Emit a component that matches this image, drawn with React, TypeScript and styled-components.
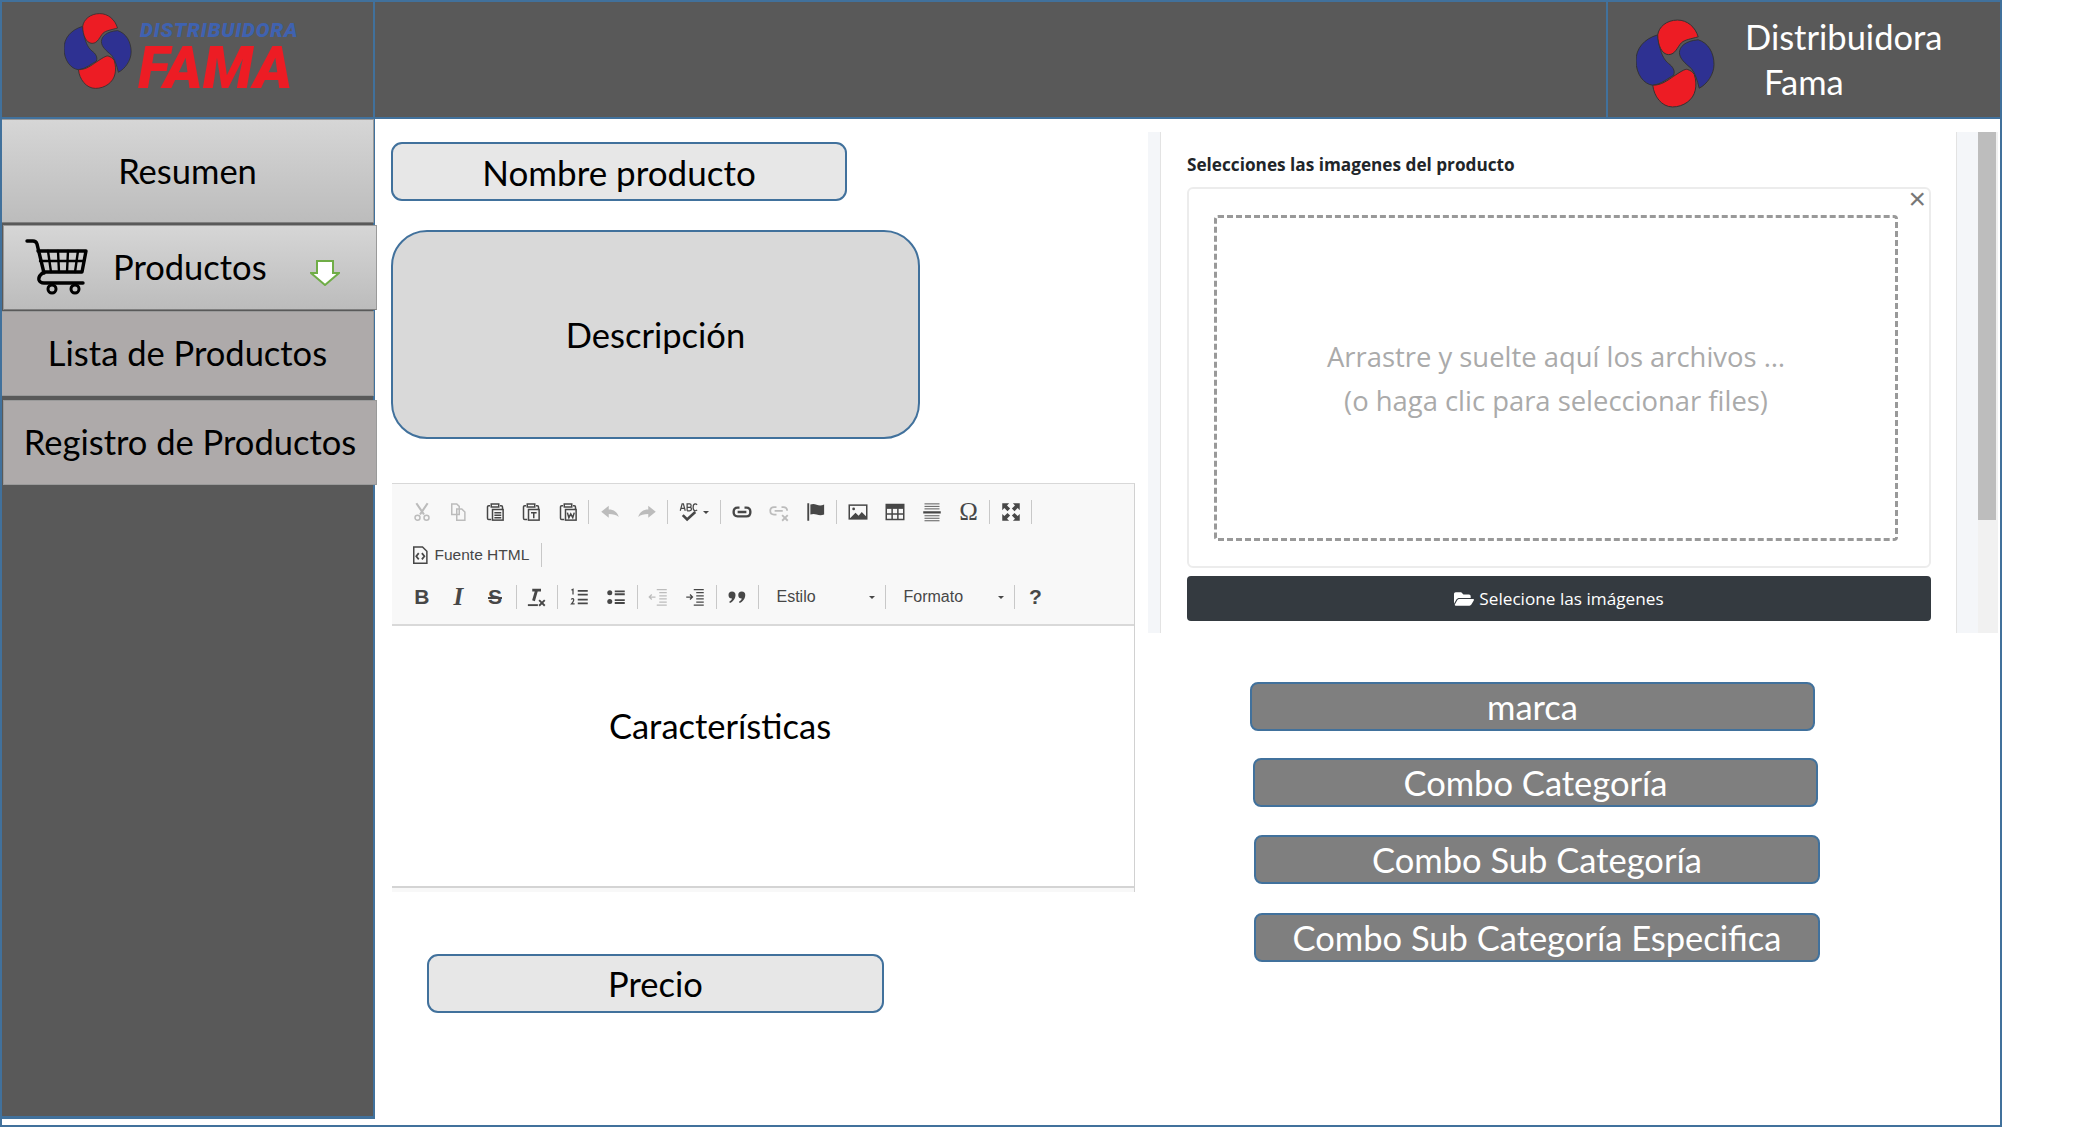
import { ReactNode } from 'react'
import styled, { createGlobalStyle } from 'styled-components'
import { FaFolderOpen } from 'react-icons/fa'

const GlobalStyle = createGlobalStyle`
    html, body {
        margin: 0;
        background: #ffffff;
    }
    * {
        box-sizing: border-box;
    }
`

const BLUE = '#41719c'
const OFFICE_FONT = 'Lato, "Noto Sans", sans-serif'

const Frame = styled.div`
    width: 2002px;
    height: 1127px;
    border: 2px solid ${BLUE};
    background: #ffffff;
    font-family: ${OFFICE_FONT};
    overflow: hidden;
`

const Header = styled.header`
    display: flex;
    height: 117px;
    background: #595959;
    border-bottom: 2px solid ${BLUE};
`

const LogoCell = styled.div`
    display: flex;
    align-items: flex-start;
    width: 373px;
    padding: 10px 0 0 62px;
    border-right: 2px solid ${BLUE};
`

const LogoText = styled.div`
    display: flex;
    flex-direction: column;
    margin-left: 6px;
    font-family: Roboto, sans-serif;
    font-style: italic;
    font-weight: 900;
`

const LogoTop = styled.span`
    margin: 8px 0 0 2px;
    font-size: 20.5px;
    line-height: 20px;
    color: #3f62b0;
    letter-spacing: 0.8px;
`

const LogoBottom = styled.span`
    margin-top: 6px;
    font-size: 59px;
    line-height: 44px;
    color: #ed1c24;
`

const HeaderFill = styled.div`
    flex: 1;
`

const BrandCell = styled.div`
    display: flex;
    align-items: flex-start;
    width: 394px;
    padding: 17px 0 0 28px;
    border-left: 2px solid ${BLUE};
`

const BrandName = styled.div`
    margin: -5px 0 0 30px;
    color: #ffffff;
    font-size: 34.5px;
    line-height: 45px;
`

const BrandLine = styled.div<{ $indent?: number }>`
    margin-left: ${(props) => props.$indent ?? 0}px;
`

const Body = styled.div`
    display: flex;
    align-items: flex-start;
`

const Sidebar = styled.aside`
    display: flex;
    flex-direction: column;
    flex: none;
    width: 373px;
    height: 1000px;
    background: #595959;
    border-right: 2px solid ${BLUE};
    border-bottom: 3px solid ${BLUE};
`

const MenuItem = styled.div<{ $variant: 'light' | 'plain'; $shift: number; $height: number; $gap?: number; $width?: number }>`
    display: flex;
    align-items: center;
    justify-content: center;
    flex: none;
    position: relative;
    width: ${(props) => props.$width ?? 373}px;
    height: ${(props) => props.$height}px;
    margin-left: ${(props) => props.$shift}px;
    margin-bottom: ${(props) => props.$gap ?? 0}px;
    padding-bottom: 2px;
    background: ${(props) => props.$variant === 'light'
        ? 'linear-gradient(#d6d6d6, #bcbcbc)'
        : '#aeaaaa'};
    border: 1px solid #9a9a9a;
    border-bottom-color: ${(props) => props.$variant === 'light' ? '#7f7f7f' : '#9a9a9a'};
    color: #000000;
    font-size: 34.5px;
`

const CartItemRow = styled(MenuItem)`
    justify-content: flex-start;
    padding: 0 0 0 21px;
`

const CartLabel = styled.span`
    margin: 0 0 2px 24px;
`

const ArrowMark = styled.svg`
    margin-left: 43px;
    margin-top: 10px;
`

const Main = styled.main`
    display: flex;
    flex: 1;
`

const LeftColumn = styled.section`
    display: flex;
    flex-direction: column;
    flex: none;
    align-items: flex-start;
    width: 773px;
    padding: 23px 0 0 16px;
`

const FieldBox = styled.div<{ $width: number; $height: number; $radius: number; $tone: string; $top?: number; $left?: number; $size?: number }>`
    display: flex;
    align-items: center;
    justify-content: center;
    width: ${(props) => props.$width}px;
    height: ${(props) => props.$height}px;
    margin-top: ${(props) => props.$top ?? 0}px;
    margin-left: ${(props) => props.$left ?? 0}px;
    border: 2px solid ${BLUE};
    border-radius: ${(props) => props.$radius}px;
    background: ${(props) => props.$tone};
    color: #000000;
    font-size: ${(props) => props.$size ?? 34.5}px;
`

const Editor = styled.div`
    width: 743px;
    height: 409px;
    margin: 44px 0 0 1px;
    display: flex;
    flex-direction: column;
    border-top: 1px solid #d8d8d8;
    border-right: 1px solid #d1d1d1;
    background: #f8f8f8;
`

const Toolbar = styled.div`
    display: flex;
    flex-direction: column;
    flex: none;
    height: 142px;
    padding: 7px 0 0 11.5px;
    background: #f8f8f8;
    border-bottom: 2px solid #d9d9d9;
`

const ToolRow = styled.div`
    display: flex;
    align-items: center;
    height: 42.5px;
`

const ToolButton = styled.span<{ $dim?: boolean; $width?: number }>`
    display: flex;
    align-items: center;
    justify-content: center;
    flex: none;
    width: ${(props) => props.$width ?? 37}px;
    height: 24px;
    color: ${(props) => props.$dim ? '#bcbcbc' : '#474747'};
`

const ToolSeparator = styled.span<{ $space?: number }>`
    flex: none;
    width: 1px;
    height: 24px;
    margin: 0 ${(props) => props.$space ?? 2}px;
    background: #c8c8c8;
`

const SourceButton = styled.span`
    display: flex;
    align-items: center;
    gap: 5px;
    padding-left: 6px;
    margin-right: 10px;
    color: #474747;
    font-family: "Liberation Sans", sans-serif;
    font-size: 15.5px;
`

const ComboButton = styled.span<{ $width: number }>`
    display: flex;
    align-items: center;
    justify-content: space-between;
    flex: none;
    width: ${(props) => props.$width}px;
    padding: 0 8px 0 16px;
    color: #474747;
    font-family: "Liberation Sans", sans-serif;
    font-size: 16px;
`

const Caret = styled.i<{ $gap?: number }>`
    display: inline-block;
    width: 0;
    height: 0;
    margin-left: ${(props) => props.$gap ?? 0}px;
    border-left: 3.5px solid transparent;
    border-right: 3.5px solid transparent;
    border-top: 3.5px solid #474747;
`

const EditorContent = styled.div`
    display: flex;
    justify-content: center;
    flex: 1;
    padding: 77px 86px 0 0;
    background: #ffffff;
    border-bottom: 2px solid #d4d4d4;
    color: #000000;
    font-size: 34.5px;
    line-height: 46px;
`

const EditorFoot = styled.div`
    flex: none;
    height: 4px;
    background: #f8f8f8;
`

const RightColumn = styled.section`
    flex: 1;
    padding-top: 13px;
`

const UploadPanel = styled.div`
    display: flex;
    height: 501px;
`

const PanelBand = styled.div<{ $side: 'left' | 'right'; $width: number }>`
    flex: none;
    width: ${(props) => props.$width}px;
    background: #f4f6f9;
    border-${(props) => props.$side === 'left' ? 'right' : 'left'}: 1px solid #e3e3e3;
`

const PanelBody = styled.div`
    flex: 1;
    display: flex;
    flex-direction: column;
    padding: 21px 25px 12px 26px;
    background: #ffffff;
`

const PanelLabel = styled.label`
    flex: none;
    height: 34px;
    font-family: "Open Sans", sans-serif;
    font-size: 17.2px;
    font-weight: 700;
    line-height: 24px;
    color: #212529;
`

const DropArea = styled.div`
    position: relative;
    flex: none;
    height: 381px;
    padding: 26px 31px 25px 25px;
    border: 2px solid #ececec;
    border-radius: 6px;
`

const DashedZone = styled.div`
    display: flex;
    flex-direction: column;
    align-items: center;
    justify-content: center;
    height: 100%;
    padding-top: 2px;
    border: 3px dashed #999999;
    border-radius: 4px;
    font-family: "Open Sans", sans-serif;
    font-size: 27.4px;
    line-height: 44px;
    color: #aaaaaa;
`

const CloseMark = styled.span`
    position: absolute;
    top: -2px;
    right: 3px;
    color: #777777;
    font-family: "Liberation Sans", sans-serif;
    font-size: 30px;
    line-height: 24px;
`

const PickButton = styled.button`
    display: flex;
    align-items: center;
    justify-content: center;
    gap: 5px;
    flex: none;
    height: 45px;
    margin-top: 8px;
    border: none;
    border-radius: 4px;
    background: #343a40;
    color: #ffffff;
    font-family: "Open Sans", sans-serif;
    font-size: 17.2px;
`

const Scrollbar = styled.div`
    flex: none;
    width: 20px;
    margin-right: 2px;
    background: #f1f1f1;
`

const ScrollThumb = styled.div`
    width: 18px;
    height: 388px;
    background: #bdbdbd;
`

const ComboList = styled.div`
    display: flex;
    flex-direction: column;
    margin: 22px 0 0 102px;
`

const ComboBox = styled.div<{ $shift: number; $top: number; $width?: number }>`
    display: flex;
    align-items: center;
    justify-content: center;
    width: ${(props) => props.$width ?? 565}px;
    height: 49px;
    margin-top: ${(props) => props.$top}px;
    margin-left: ${(props) => props.$shift}px;
    border: 2px solid ${BLUE};
    border-radius: 8px;
    background: #7f7f7f;
    color: #ffffff;
    font-size: 34.5px;
`

function LogoMark({ width, height }: { width: number; height: number }) {
    return (
        <svg width={width} height={height} viewBox="0 0 80 90" style={{ flex: 'none' }}>
            <g stroke="#333" strokeWidth="1">
                <path fill="#2e3192" d="M22 16C8 20 0 30 0 42C0 56 8 66 17 67C26 66 32 60 38 57C40 52 37 48 33 45C28 41 24 34 22 16Z" />
                <path fill="#2e3192" d="M63 21C73 24 79 34 79 46C79 56 72 66 64 70C62 62 60 55 56 50C50 45 44 40 44 34C44 28 50 22 63 21Z" />
                <path fill="#ed1c24" d="M42 1C52 1 60 8 63 18C56 20 49 21 46 24C42 28 40 36 33 36C26 36 22 26 22 16C23 8 31 1 42 1Z" />
                <path fill="#ed1c24" d="M59 56C61 62 61 68 60 72C58 82 48 89 37 89C26 89 18 78 17 67C26 67 32 62 38 58C44 54 50 50 52 51C55 52 57 53 59 56Z" />
            </g>
        </svg>
    )
}

function CartIcon() {
    return (
        <svg width="64" height="58" viewBox="0 0 64 58" fill="none" stroke="#000" strokeLinecap="round" strokeLinejoin="round" style={{ flex: 'none' }}>
            <path strokeWidth="3.4" d="M2 2H8Q11 2 12 5L19 34" />
            <path strokeWidth="3.4" d="M13 12H61L57 33H19Q13 37 14 41Q15 44 19 44H58" />
            <path strokeWidth="2.4" d="M15 22H59M23 12L26 33M33 12L34 33M43 12L42 33M53 12L50 33" />
            <circle strokeWidth="3" cx="27" cy="50" r="4" />
            <circle strokeWidth="3" cx="50" cy="50" r="4" />
        </svg>
    )
}

// 16x16 toolbar pictures, drawn to look like the editor's own set
function Glyph({ children, size = 20 }: { children: ReactNode; size?: number }) {
    return (
        <svg width={size} height={size} viewBox="0 0 16 16" fill="none" stroke="currentColor" strokeWidth="1.2">
            {children}
        </svg>
    )
}

const clipboard = <path d="M4 3H3Q2 3 2 4V13Q2 14 3 14H5M5 1.500H11V4H5ZM12 3H13Q14 3 14 4V6" />

const glyphs: Record<string, ReactNode> = {
    cut: <><path strokeWidth="1.7" d="M3.5 1L9.6 10M12.5 1L6.4 10" /><circle cx="4.4" cy="12.6" r="2" /><circle cx="11.6" cy="12.6" r="2" /></>,
    copy: <path d="M3 1.5H7L9 3.5V10H3ZM7 5.5H11L13.5 8V14.5H7Z" />,
    paste: <>{clipboard}<rect x="6" y="6" width="8.5" height="8.5" /><path d="M7.5 8.5H13M7.5 10.5H13M7.5 12.5H13" /></>,
    pasteText: <>{clipboard}<rect x="6" y="6" width="8.5" height="8.5" /><path d="M8 8.5H12.5M10.2 8.5V13" /></>,
    pasteWord: <>{clipboard}<rect x="6" y="6" width="8.5" height="8.5" /><path d="M7.5 8.5L8.7 12.5L10.2 9.5L11.8 12.5L13 8.5" /></>,
    undo: <path fill="currentColor" stroke="none" d="M7 3V6C11 6 14 8 15 12C13 10 10.500 9.500 7 9.500V12.500L1 7.800Z" />,
    redo: <path fill="currentColor" stroke="none" d="M9 3V6C5 6 2 8 1 12C3 10 5.500 9.500 9 9.500V12.500L15 7.800Z" />,
    spell: <><path strokeWidth="1" d="M1 7L2.500 1.500H3.500L5 7M1.700 5H4.300M6.500 7V1.500H8.500Q9.700 1.500 9.700 2.900Q9.700 4.200 8.500 4.200H6.500M8.500 4.200Q10 4.200 10 5.600Q10 7 8.500 7H6.500M14.500 2.200Q13.800 1.500 13 1.500Q11.300 1.500 11.300 4.200Q11.300 7 13 7Q13.800 7 14.500 6.300" /><path strokeWidth="2.100" d="M3 10.500L6.500 14L13 8" /></>,
    link: <path strokeWidth="1.900" d="M6 4.500H4.500Q1.300 4.500 1.300 8Q1.300 11.500 4.500 11.500H11.500Q14.700 11.500 14.700 8Q14.700 4.500 11.500 4.500H10M4.500 8H11.500" />,
    unlink: <><path strokeWidth="1.400" d="M6 4H4Q1 4 1 7Q1 10 4 10H6M10 4H11.500Q14.500 4 14.500 7M4.500 7H11" /><path strokeWidth="1.500" d="M10.500 10.500L15 15M15 10.500L10.500 15" /></>,
    flag: <><path d="M1.800 1V15" strokeWidth="1.500" /><path fill="currentColor" stroke="none" d="M3.500 2Q6 1 8.500 2.200Q11.500 3.400 14.500 2V10Q11.500 11.200 8.500 10Q6 9 3.500 10Z" /></>,
    image: <><rect x="1" y="2.500" width="14" height="11" /><circle cx="4.500" cy="5.500" r="1.100" fill="currentColor" stroke="none" /><path fill="currentColor" stroke="none" d="M1 13.500L6 8.500L8.500 11L11 8L15 12V13.500Z" /></>,
    table: <><rect x="1" y="2" width="14" height="12" /><path fill="currentColor" stroke="none" d="M1 2H15V5.500H1Z" /><path d="M1 9.500H15M5.700 5V14M10.300 5V14" /></>,
    rule: <><path d="M2 1.500H14M2 3.500H14M2 5.500H14M2 11H14M2 13H14M2 15H14" strokeWidth="0.700" /><path d="M1 8.300H15" strokeWidth="1.800" /></>,
    max: <path fill="currentColor" stroke="none" d="M1 1H6.500L4.800 2.700L7.300 5.200L5.200 7.300L2.700 4.800L1 6.500ZM15 1V6.500L13.300 4.800L10.800 7.300L8.700 5.200L11.200 2.700L9.500 1ZM1 15V9.500L2.700 11.200L5.200 8.700L7.300 10.800L4.800 13.300L6.500 15ZM15 15H9.500L11.200 13.300L8.700 10.800L10.800 8.700L13.300 11.200L15 9.500Z" />,
    source: <><path d="M3 1.500H10L13.500 5V14.500H3Z" /><path strokeWidth="1.400" d="M7 6.500L5 9L7 11.500M9.500 6.500L11.500 9L9.500 11.500" /></>,
    clear: <><path strokeWidth="2.300" d="M5 2.500H12M8.500 2.500L6 11" /><path d="M1.500 14.500H9.500" strokeWidth="1.500" /><path strokeWidth="1.500" d="M10.500 10.500L15 15M15 10.500L10.500 15" /></>,
    ol: <><path strokeWidth="1" d="M2 2.500L3.200 1.800V6M1.800 10Q2.500 9 3.500 9.500Q4.500 10.500 2 13.500H4.500" /><path strokeWidth="1.400" d="M7 3H15M7 6H15M7 10H15M7 13H15" /></>,
    ul: <><circle cx="3" cy="4.500" r="2" fill="currentColor" stroke="none" /><circle cx="3" cy="11.500" r="2" fill="currentColor" stroke="none" /><path strokeWidth="1.500" d="M7 3.500H15M7 5.800H15M7 10.500H15M7 12.800H15" /></>,
    outdent: <><path strokeWidth="1" d="M7 2H15M9 4.500H15M9 7H15M9 9.500H15M9 12H15M7 14.500H15" /><path strokeWidth="1" d="M6 8H1M3 6L1 8L3 10" /></>,
    indent: <><path strokeWidth="1" d="M7 2H15M9 4.500H15M9 7H15M9 9.500H15M9 12H15M7 14.500H15" /><path strokeWidth="1" d="M1 8H6M4 6L6 8L4 10" /></>,
    quote: <path fill="currentColor" stroke="none" d="M4 3.500A2.800 2.800 0 0 1 6.800 6.300C6.800 9 5 11.500 2.300 12.800L1.800 11.800C3 11 3.800 10.100 4 9.100A2.800 2.800 0 1 1 4 3.500ZM11.800 3.500A2.800 2.800 0 0 1 14.600 6.300C14.600 9 12.800 11.500 10.100 12.800L9.600 11.800C10.800 11 11.600 10.100 11.800 9.100A2.800 2.800 0 1 1 11.800 3.500Z" />,
}

const LetterGlyph = styled.span<{ $italic?: boolean; $strike?: boolean; $serif?: boolean; $thin?: boolean }>`
    font-family: ${(props) => props.$serif ? '"Liberation Serif", serif' : '"Liberation Sans", sans-serif'};
    font-size: ${(props) => props.$serif ? 25 : 21}px;
    font-weight: ${(props) => props.$thin ? 400 : 700};
    font-style: ${(props) => props.$italic ? 'italic' : 'normal'};
    text-decoration: ${(props) => props.$strike ? 'line-through' : 'none'};
    line-height: 24px;
`

function Tool({ name, dim, width }: { name: string; dim?: boolean; width?: number }) {
    return (
        <ToolButton $dim={dim} $width={width}>
            <Glyph>{glyphs[name]}</Glyph>
        </ToolButton>
    )
}

export default function App() {
    return (
        <Frame>
            <GlobalStyle />
            <Header>
                <LogoCell>
                    <LogoMark width={68} height={78} />
                    <LogoText>
                        <LogoTop>DISTRIBUIDORA</LogoTop>
                        <LogoBottom>FAMA</LogoBottom>
                    </LogoText>
                </LogoCell>
                <HeaderFill />
                <BrandCell>
                    <LogoMark width={79} height={89} />
                    <BrandName>
                        <BrandLine>Distribuidora</BrandLine>
                        <BrandLine $indent={19}>Fama</BrandLine>
                    </BrandName>
                </BrandCell>
            </Header>
            <Body>
                <Sidebar>
                    <MenuItem $variant="light" $shift={-1} $height={104} $gap={2}>Resumen</MenuItem>
                    <CartItemRow $variant="light" $shift={1} $height={85} $gap={1} $width={374}>
                        <CartIcon />
                        <CartLabel>Productos</CartLabel>
                        <ArrowMark width="30" height="26" viewBox="0 0 30 26">
                            <path d="M7 1H23V13H29L15 25L1 13H7Z" fill="#fff" stroke="#70ad47" strokeWidth="2" />
                        </ArrowMark>
                    </CartItemRow>
                    <MenuItem $variant="plain" $shift={-1} $height={85} $gap={4}>Lista de Productos</MenuItem>
                    <MenuItem $variant="plain" $shift={1} $height={85} $width={374}>Registro de Productos</MenuItem>
                </Sidebar>
                <Main>
                    <LeftColumn>
                        <FieldBox $width={456} $height={59} $radius={11} $tone="#e7e7e7" $size={35}>Nombre producto</FieldBox>
                        <FieldBox $width={529} $height={209} $radius={36} $tone="#d9d9d9" $top={29}>Descripción</FieldBox>
                        <Editor>
                            <Toolbar>
                                <ToolRow>
                                    <Tool name="cut" dim width={36.5} />
                                    <Tool name="copy" dim width={36.5} />
                                    <Tool name="paste" width={36.5} />
                                    <Tool name="pasteText" width={36.5} />
                                    <Tool name="pasteWord" width={36.5} />
                                    <ToolSeparator />
                                    <Tool name="undo" dim />
                                    <Tool name="redo" dim />
                                    <ToolSeparator />
                                    <ToolButton $width={48}>
                                        <Glyph>{glyphs.spell}</Glyph>
                                        <Caret $gap={4} />
                                    </ToolButton>
                                    <ToolSeparator />
                                    <Tool name="link" />
                                    <Tool name="unlink" dim />
                                    <Tool name="flag" />
                                    <ToolSeparator />
                                    <Tool name="image" />
                                    <Tool name="table" />
                                    <Tool name="rule" />
                                    <ToolButton><LetterGlyph $serif $thin>Ω</LetterGlyph></ToolButton>
                                    <ToolSeparator />
                                    <Tool name="max" />
                                    <ToolSeparator />
                                </ToolRow>
                                <ToolRow>
                                    <SourceButton>
                                        <Glyph>{glyphs.source}</Glyph>
                                        Fuente HTML
                                    </SourceButton>
                                    <ToolSeparator />
                                </ToolRow>
                                <ToolRow>
                                    <ToolButton $width={36.5}><LetterGlyph>B</LetterGlyph></ToolButton>
                                    <ToolButton $width={36.5}><LetterGlyph $italic $serif>I</LetterGlyph></ToolButton>
                                    <ToolButton><LetterGlyph $strike>S</LetterGlyph></ToolButton>
                                    <ToolSeparator />
                                    <Tool name="clear" width={35} />
                                    <ToolSeparator $space={3} />
                                    <Tool name="ol" />
                                    <Tool name="ul" />
                                    <ToolSeparator />
                                    <Tool name="outdent" dim />
                                    <Tool name="indent" />
                                    <ToolSeparator />
                                    <Tool name="quote" />
                                    <ToolSeparator />
                                    <ComboButton $width={122}>Estilo<Caret /></ComboButton>
                                    <ToolSeparator />
                                    <ComboButton $width={124}>Formato<Caret /></ComboButton>
                                    <ToolSeparator />
                                    <ToolButton $width={38}><LetterGlyph>?</LetterGlyph></ToolButton>
                                </ToolRow>
                            </Toolbar>
                            <EditorContent>Características</EditorContent>
                            <EditorFoot />
                        </Editor>
                        <FieldBox $width={457} $height={59} $radius={11} $tone="#e7e7e7" $top={62} $left={36}>Precio</FieldBox>
                    </LeftColumn>
                    <RightColumn>
                        <UploadPanel>
                            <PanelBand $side="left" $width={13} />
                            <PanelBody>
                                <PanelLabel>Selecciones las imagenes del producto</PanelLabel>
                                <DropArea>
                                    <CloseMark>×</CloseMark>
                                    <DashedZone>
                                        <span>Arrastre y suelte aquí los archivos …</span>
                                        <span>(o haga clic para seleccionar files)</span>
                                    </DashedZone>
                                </DropArea>
                                <PickButton><FaFolderOpen size={20} />Selecione las imágenes</PickButton>
                            </PanelBody>
                            <PanelBand $side="right" $width={22} />
                            <Scrollbar><ScrollThumb /></Scrollbar>
                        </UploadPanel>
                        <ComboList>
                            <ComboBox $shift={0} $top={27}>marca</ComboBox>
                            <ComboBox $shift={3} $top={27}>Combo Categoría</ComboBox>
                            <ComboBox $shift={4} $top={28} $width={566}>Combo Sub Categoría</ComboBox>
                            <ComboBox $shift={4} $top={29} $width={566}>Combo Sub Categoría Especifica</ComboBox>
                        </ComboList>
                    </RightColumn>
                </Main>
            </Body>
        </Frame>
    )
}
